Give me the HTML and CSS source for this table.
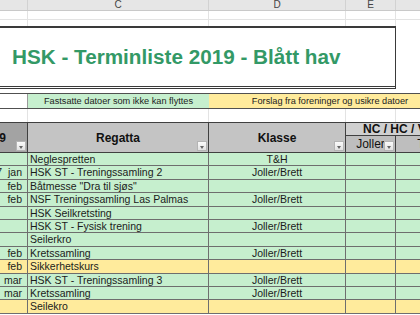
FILE: index.html
```html
<!DOCTYPE html>
<html lang="no">
<head>
<meta charset="utf-8">
<title>HSK - Terminliste 2019</title>
<link rel="stylesheet" href="styles.css">
</head>
<body>
<div class="sheet">
  <div class="cols colhead">
    <div></div><div>C</div><div>D</div><div>E</div><div></div>
  </div>
  <div class="cols blank r1">
    <div></div><div></div><div></div><div></div><div></div>
  </div>
  <div class="cols blank r2">
    <div></div><div></div><div></div><div></div><div></div>
  </div>
  <div class="titlebox">
    <h1 class="title">HSK - Terminliste 2019 - Blått hav</h1>
  </div>
  <div class="gap"></div>
  <div class="cols band">
    <div class="band-a"></div>
    <div class="band-green">Fastsatte datoer som ikke kan flyttes</div>
    <div class="band-yellow">Forslag fra foreninger og usikre datoer</div>
  </div>
  <div class="cols blank r3">
    <div></div><div></div><div></div><div></div><div></div>
  </div>

  <div class="cols thead">
    <div class="h-a"><span class="htxt">2019</span><span class="dd"></span></div>
    <div class="h-c">Regatta<span class="dd"></span></div>
    <div class="h-d">Klasse<span class="dd"></span></div>
    <div class="h-nc">NC / HC / VM</div>
    <div class="h-e">Joller<span class="dd"></span></div>
    <div class="h-f">Tur</div>
  </div>

  <div class="rows">
    <div class="cols row green">
      <div class="c-date"></div><div class="c-reg">Neglespretten</div><div class="c-kl">T&amp;H</div><div class="c-e"></div><div class="c-f">V</div>
    </div>
    <div class="cols row green">
      <div class="c-date"><span>17&nbsp;&nbsp;jan</span></div><div class="c-reg">HSK ST - Treningssamling 2</div><div class="c-kl">Joller/Brett</div><div class="c-e"></div><div class="c-f"></div>
    </div>
    <div class="cols row green">
      <div class="c-date"><span>feb</span></div><div class="c-reg">Båtmesse "Dra til sjøs"</div><div class="c-kl"></div><div class="c-e"></div><div class="c-f"></div>
    </div>
    <div class="cols row green">
      <div class="c-date"><span>feb</span></div><div class="c-reg">NSF Treningssamling Las Palmas</div><div class="c-kl">Joller/Brett</div><div class="c-e"></div><div class="c-f"></div>
    </div>
    <div class="cols row green">
      <div class="c-date"></div><div class="c-reg">HSK Seilkretsting</div><div class="c-kl"></div><div class="c-e"></div><div class="c-f"></div>
    </div>
    <div class="cols row green">
      <div class="c-date"></div><div class="c-reg">HSK ST - Fysisk trening</div><div class="c-kl">Joller/Brett</div><div class="c-e"></div><div class="c-f"></div>
    </div>
    <div class="cols row green">
      <div class="c-date"></div><div class="c-reg">Seilerkro</div><div class="c-kl"></div><div class="c-e"></div><div class="c-f"></div>
    </div>
    <div class="cols row green">
      <div class="c-date"><span>feb</span></div><div class="c-reg">Kretssamling</div><div class="c-kl">Joller/Brett</div><div class="c-e"></div><div class="c-f"></div>
    </div>
    <div class="cols row yellow">
      <div class="c-date"><span>feb</span></div><div class="c-reg">Sikkerhetskurs</div><div class="c-kl"></div><div class="c-e"></div><div class="c-f"></div>
    </div>
    <div class="cols row green">
      <div class="c-date"><span>mar</span></div><div class="c-reg">HSK ST - Treningssamling 3</div><div class="c-kl">Joller/Brett</div><div class="c-e"></div><div class="c-f"></div>
    </div>
    <div class="cols row green">
      <div class="c-date"><span>mar</span></div><div class="c-reg">Kretssamling</div><div class="c-kl">Joller/Brett</div><div class="c-e"></div><div class="c-f"></div>
    </div>
    <div class="cols row yellow">
      <div class="c-date"></div><div class="c-reg">Seilekro</div><div class="c-kl"></div><div class="c-e"></div><div class="c-f"></div>
    </div>
  </div>
</div>
</body>
</html>
```
FILE: styles.css
```css
* { box-sizing: border-box; margin: 0; padding: 0; }

html, body {
  width: 420px;
  height: 315px;
  overflow: hidden;
  background: #ffffff;
}

body {
  margin: 0;
  font-family: "Liberation Sans", Arial, sans-serif;
  color: #1b1b1b;
}

.sheet {
  width: 456px;
}

.cols {
  display: grid;
  grid-template-columns: 28px 181px 137px 50px 60px;
}

/* spreadsheet column letters */
.colhead {
  height: 11px;
  background: #e6e6e6;
  border-bottom: 1px solid #c9c9c9;
}
.colhead > div {
  border-right: 1px solid #d2d2d2;
  font-size: 10px;
  line-height: 10px;
  text-align: center;
  color: #444;
}

/* empty spreadsheet rows */
.blank > div {
  border-right: 1px solid #e3e3e3;
}
.blank.r1 { height: 9px; border-bottom: 1px solid #e3e3e3; }
.blank.r2 { height: 6px; }
.blank.r3 { height: 13px; }

/* title block */
.titlebox {
  width: 396px;
  height: 63px;
  border-top: 2px solid #3a3a3a;
  border-bottom: 3px double #3a3a3a;
  border-right: 1px solid #3a3a3a;
  display: flex;
  align-items: center;
  padding-left: 12px;
}
.title {
  font-size: 20.7px;
  font-weight: 700;
  color: #339966;
  white-space: nowrap;
}

.gap { height: 4px; }

/* legend band */
.band {
  height: 16px;
  border-top: 1px solid #505050;
  border-bottom: 1px solid #505050;
}
.band > div {
  font-size: 9.2px;
  line-height: 14px;
  text-align: center;
  white-space: nowrap;
  color: #222;
}
.band-a {
  border-right: 1px solid #9a9a9a;
}
.band-green {
  background: #c6efce;
}
.band-yellow {
  grid-column: 3 / 6;
  background: #ffeb9c;
  padding-right: 5px;
}

/* table header */
.thead {
  grid-template-rows: 13px 16px;
  border-top: 1px solid #404040;
  border-bottom: 1px solid #404040;
  font-size: 12px;
  font-weight: 700;
  color: #111;
}
.thead > div {
  position: relative;
  display: flex;
  align-items: center;
  white-space: nowrap;
  overflow: hidden;
}
.h-a {
  grid-row: 1 / 3;
  grid-column: 1;
  background: #a3a3a3;
  border-right: 1px solid #404040;
  justify-content: flex-end;
  padding-right: 21px;
}
.htxt { flex-shrink: 0; }
.h-c, .h-d {
  grid-row: 1 / 3;
  background: #c4c4c4;
  border-right: 1px solid #404040;
  justify-content: center;
}
.h-c { grid-column: 2; }
.h-d { grid-column: 3; }
.h-nc {
  grid-row: 1;
  grid-column: 4 / 6;
  background: #d0d0d0;
  border-bottom: 1px solid #404040;
  padding-left: 17px;
}
.h-e, .h-f {
  grid-row: 2;
  background: #bebebe;
  font-weight: 400;
  justify-content: center;
}
.h-e { grid-column: 4; border-right: 1px solid #404040; }
.h-f { grid-column: 5; }

/* filter dropdown buttons */
.dd {
  position: absolute;
  right: 1px;
  bottom: 1px;
  width: 10px;
  height: 10px;
  background: linear-gradient(#fbfbfb, #e2e2e2);
  border: 1px solid #b4b4b4;
}
.dd::after {
  content: "";
  position: absolute;
  left: 2px;
  top: 4px;
  border-left: 2.5px solid transparent;
  border-right: 2.5px solid transparent;
  border-top: 3px solid #666;
}

/* data rows */
.row {
  height: 13.4px;
  border-bottom: 1px solid #6e6e6e;
  font-size: 10.5px;
  color: #1b1b1b;
}
.row.green { background: #c6efce; }
.row.yellow { background: #ffeb9c; }
.row > div {
  border-right: 1px solid #6e6e6e;
  white-space: nowrap;
  overflow: hidden;
  line-height: 12.4px;
}
.c-date {
  display: flex;
  justify-content: flex-end;
  padding-right: 5px;
}
.c-date span { flex-shrink: 0; }
.c-reg { padding-left: 2px; }
.c-kl, .c-e, .c-f { text-align: center; }
```
